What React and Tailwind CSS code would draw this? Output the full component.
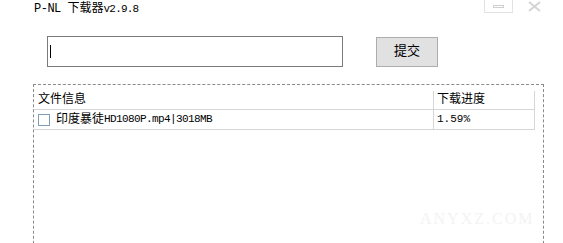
import React from 'react'

const font = { fontFamily: '"Liberation Mono", "Noto Sans CJK SC", monospace' }

const App = () => {
    return (
        <div className="w-[563px] h-[243px] bg-white overflow-hidden relative text-black" style={font}>
            <div className="flex items-start h-[26px]">
                <p className="ml-[34px] mt-[2px] text-[12px] leading-[14px] whitespace-nowrap">
                    <span className="tracking-[-0.5px]">P-NL </span>
                    <span>下载器</span>
                    <span className="text-[11px] tracking-[-0.8px]">v2.9.8</span>
                </p>
                <div className="ml-auto flex items-start mr-[22px]">
                    <div className="w-[29px] h-[13px] border-x border-b border-[#e2e2e2] flex items-center justify-center">
                        <div className="w-[11px] h-[3px] border border-[#cfcfcf]" />
                    </div>
                    <svg className="ml-[15px] mt-[1px]" width="13" height="11" viewBox="0 0 13 11">
                        <path d="M1 1 L12 10 M12 1 L1 10" stroke="#d4d4d4" strokeWidth="2" fill="none" />
                    </svg>
                </div>
            </div>
            <div className="flex items-center mt-[10px] ml-[47px]">
                <div className="w-[296px] h-[31px] border border-[#7a7a7a] flex items-center pl-[2px]">
                    <div className="w-px h-[13px] bg-black" />
                </div>
                <button className="ml-[33px] w-[62px] h-[30px] bg-[#e1e1e1] border border-[#adadad] text-[13px]">提交</button>
            </div>
            <div className="ml-[33px] mt-[17px] w-[511px] h-[170px] border border-dashed border-[#8a8a8a] pt-[6px] pr-[8px]">
                <div className="flex text-[12px] h-[19px] border-b border-[#d6d6d6]">
                    <div className="w-[400px] pl-[4px] border-r border-[#d6d6d6] leading-[18px]">文件信息</div>
                    <div className="w-[101px] pl-[3px] border-r border-[#d6d6d6] leading-[18px]">下载进度</div>
                </div>
                <div className="flex text-[11px] h-[20px] border-b border-[#d6d6d6]">
                    <div className="w-[400px] pl-[4px] border-r border-[#d6d6d6] flex items-center">
                        <div className="w-[12px] h-[12px] border border-[#7f9db9] bg-white mr-[6px]" />
                        <span className="text-[12px]">印度暴徒</span>
                        <span className="tracking-[-0.6px]">HD1080P.mp4|3018MB</span>
                    </div>
                    <div className="w-[101px] pl-[3px] border-r border-[#d6d6d6] flex items-center">1.59%</div>
                </div>
            </div>
            <p className="absolute left-[420px] top-[207px] text-[16px] text-[#f3f3f3] tracking-[2px]" style={{ fontFamily: '"Liberation Serif", serif' }}>ANYXZ.COM</p>
        </div>
    )
}

export default App
